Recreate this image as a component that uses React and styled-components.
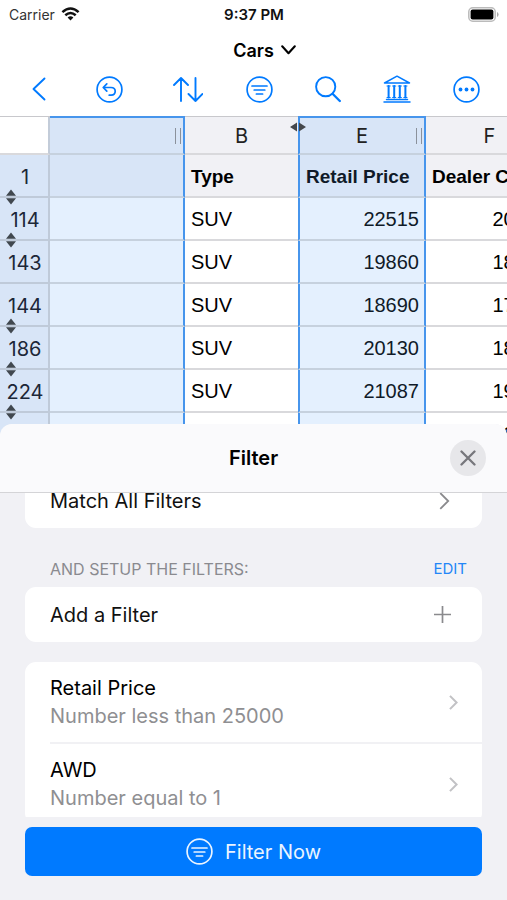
import React from "react";
import styled, { createGlobalStyle, css } from "styled-components";

const BLUE = "#007aff";
const SELECT = "#4795ec";
const UI_FONT = 'Inter, "Liberation Sans", sans-serif';
const CELL_FONT = '"Liberation Sans", Arial, sans-serif';

const GlobalStyle = createGlobalStyle`
  * { box-sizing: border-box; }
  body { margin: 0; background: #fff; }
  button { border: 0; background: none; padding: 0; margin: 0; font: inherit; color: inherit; cursor: pointer; }
  svg { display: block; flex: none; }
`;

const Screen = styled.div`
  display: flex;
  flex-direction: column;
  height: 100vh;
  overflow: hidden;
  background: #fff;
  color: #000;
  font-family: ${UI_FONT};
`;

const StatusBar = styled.div`
  display: grid;
  grid-template-columns: 1fr auto 1fr;
  align-items: center;
  flex: none;
  height: 28px;
  padding: 0 8px 0 9px;
  font-size: 14px;
`;

const Carrier = styled.span`
  display: flex;
  align-items: center;
  gap: 6px;
  color: #333;
`;

const Clock = styled.time`
  font-size: 15px;
  font-weight: 600;
  color: #111;
`;

const BatterySlot = styled.span`
  justify-self: end;
`;

const TitleBar = styled.header`
  display: flex;
  justify-content: center;
  flex: none;
  padding-left: 22px;
`;

const TitleButton = styled.button`
  && {
    display: flex;
    align-items: center;
    gap: 7px;
    height: 44px;
    font-size: 18px;
    font-weight: 600;
  }
`;

const Toolbar = styled.nav`
  display: flex;
  justify-content: space-between;
  align-items: center;
  height: 44px;
  flex: none;
  padding: 0 27px 10px 32px;
  color: ${BLUE};
`;

const ToolGroup = styled.div`
  display: flex;
  align-items: center;
  gap: ${(p) => p.$gap}px;
`;

const ToolButton = styled.button`
  && {
    display: flex;
    color: ${BLUE};
  }
`;

const SheetGrid = styled.main`
  flex: none;
  overflow: hidden;
`;

const Table = styled.table`
  table-layout: fixed;
  width: 553px;
  min-width: 100%;
  border-collapse: separate;
  border-spacing: 0;
  border-top: 1px solid #c8c8cc;
  font-family: ${CELL_FONT};
  font-size: 20px;
`;

const Col = styled.col`
  width: ${(p) => p.$w}px;
`;

const edges = css`
  border-bottom: 2px solid ${(p) => (p.$selected ? "#c6d1de" : "#d9d9dc")};
  border-right: ${(p) => (p.$edge ? `2px solid ${SELECT}` : "0")};
  border-left: ${(p) => (p.$edge === "both" ? `2px solid ${SELECT}` : "0")};
`;

const ColumnHead = styled.th`
  ${edges}
  position: relative;
  height: 38px;
  padding: 2px 0 0;
  font-family: ${UI_FONT};
  font-size: 20px;
  font-weight: 400;
  color: #222;
  background: ${(p) => (p.$selected ? "#d8e5f7" : "#f1f1f5")};
  box-shadow: ${(p) => (p.$selected ? `0 -1px 0 ${SELECT}, inset 0 1px 0 ${SELECT}` : "none")};
`;

const Corner = styled.td`
  border-right: 2px solid #c3ccd9;
  border-bottom: 2px solid #d9d9dc;
`;

const RowHead = styled.th`
  position: relative;
  height: 43px;
  padding: 2px 0 0 2px;
  border-right: 2px solid #bfcad9;
  border-bottom: 2px solid #bfcad9;
  background: #d8e5f7;
  color: #1c2738;
  font-family: ${UI_FONT};
  font-size: 20px;
  font-weight: 400;
`;

const Cell = styled.td`
  ${edges}
  height: 43px;
  padding: 2px 5px 0 6px;
  white-space: nowrap;
  overflow: hidden;
  text-align: ${(p) => (p.$number ? "right" : "left")};
  font-size: ${(p) => (p.$head ? 19 : 20)}px;
  font-weight: ${(p) => (p.$head ? 700 : 400)};
  color: ${(p) => (p.$selected ? "#101a28" : "#000")};
  background: ${(p) => (p.$head ? (p.$selected ? "#d8e5f7" : "#f1f1f5") : p.$selected ? "#e4f0fe" : "#fff")};
`;

const Grip = styled.span`
  position: absolute;
  right: 2px;
  top: 11px;
  width: 6px;
  height: 16px;
  border: solid #8b919b;
  border-width: 0 1px;
`;

const RowMarker = styled.svg`
  position: absolute;
  left: 5px;
  bottom: -9px;
  z-index: 1;
`;

const ColumnMarker = styled.svg`
  position: absolute;
  left: -11px;
  top: 5px;
`;

const FilterSheet = styled.section`
  position: relative;
  z-index: 2;
  display: flex;
  flex-direction: column;
  flex: 1;
  min-height: 0;
  margin-top: -32px;
  border-radius: 12px 12px 0 0;
  overflow: hidden;
  background: #f1f1f5;
`;

const SheetHeader = styled.header`
  display: grid;
  grid-template-columns: 1fr auto 1fr;
  align-items: center;
  flex: none;
  height: 69px;
  padding: 0 21px;
  background: #fafafc;
  border-bottom: 1px solid #d4d4d7;
`;

const SheetTitle = styled.h1`
  grid-column: 2;
  margin: 0;
  font-size: 20px;
  font-weight: 600;
`;

const CloseButton = styled.button`
  && {
    display: flex;
    align-items: center;
    justify-content: center;
    justify-self: end;
    width: 36px;
    height: 36px;
    border-radius: 50%;
    background: #e7e7ea;
    color: #77777c;
  }
`;

const ScrollArea = styled.div`
  flex: 1;
  min-height: 0;
  overflow: hidden;
  margin: 0 25px;
`;

const Card = styled.div`
  border-radius: 11px;
  overflow: hidden;
  background: #fff;
  margin-top: ${(p) => p.$top || 0}px;
`;

const CardButton = styled.button`
  && {
    display: flex;
    align-items: center;
    justify-content: space-between;
    width: 100%;
    height: 55px;
    padding: 0 ${(p) => p.$inset}px 0 25px;
    font-size: 20px;
    text-align: left;
    color: #111;
  }
`;

const SectionHead = styled.div`
  display: flex;
  justify-content: space-between;
  align-items: flex-end;
  height: 59px;
  padding: 0 15px 8px 25px;
  color: #8a8a8f;
  font-size: 15px;
  line-height: 20px;
`;

const SectionLabel = styled.h2`
  margin: 0;
  font-size: 16px;
  font-weight: 400;
`;

const EditButton = styled.button`
  && {
    color: #2386f7;
  }
`;

const RuleButton = styled.button`
  && {
    display: block;
    width: 100%;
    padding-left: 25px;
    text-align: left;
  }
`;

const RuleBody = styled.span`
  display: flex;
  align-items: center;
  justify-content: space-between;
  height: ${(p) => (p.$last ? 80 : 82)}px;
  padding-right: 24px;
  border-bottom: ${(p) => (p.$last ? 0 : 2)}px solid #f1f1f4;
`;

const RuleText = styled.span`
  display: flex;
  flex-direction: column;
  font-size: 20px;
  line-height: 28px;
  color: #000;
`;

const RuleDetail = styled.span`
  color: #8f8f92;
`;

const SheetFooter = styled.footer`
  flex: none;
  padding: 10px 25px 24px;
`;

const PrimaryButton = styled.button`
  && {
    display: flex;
    align-items: center;
    justify-content: center;
    gap: 12px;
    width: 100%;
    height: 49px;
    border-radius: 7px;
    background: ${BLUE};
    color: #eaf4ff;
    font-size: 20px;
  }
`;

const line = { fill: "none", stroke: "currentColor", strokeLinecap: "round", strokeLinejoin: "round" };

const WifiIcon = () => (
  <svg width="19" height="14" viewBox="0 0 18 14" fill="none" stroke="#111" strokeWidth="2.5" aria-hidden="true">
    <path d="M.9 5.1Q9-2.2 17.1 5.1" />
    <path d="M3.8 8.3Q9 3.6 14.2 8.3" />
    <path d="M6.1 10.4Q9 8 11.9 10.4L9 13.6Z" fill="#111" stroke="none" />
  </svg>
);

const BatteryIcon = () => (
  <svg width="31" height="15" viewBox="0 0 31 15" aria-hidden="true">
    <rect x=".8" y=".8" width="26.4" height="13.4" rx="4" fill="#fff" stroke="#bbb" strokeWidth="1.5" />
    <rect x="2.6" y="2.6" width="22.8" height="9.8" rx="2" fill="#000" />
    <path d="M29 5v5q1.6-.8 1.6-2.5T29 5z" fill="#aaa" />
  </svg>
);

const TitleChevron = () => (
  <svg width="15" height="10" viewBox="0 0 15 10" {...line} strokeWidth="2.1" aria-hidden="true">
    <path d="M1.2 1.300l6.300 6.900 6.300-6.900" />
  </svg>
);

const BackIcon = () => (
  <svg width="14" height="24" viewBox="0 0 14 24" {...line} strokeWidth="1.9" aria-hidden="true">
    <path d="M12.500 1.500L1.500 12l11 10.500" />
  </svg>
);

const UndoIcon = () => (
  <svg width="27" height="27" viewBox="0 0 27 27" {...line} strokeWidth="1.7" aria-hidden="true">
    <circle cx="13.5" cy="13.5" r="12.4" />
    <path d="M10.800 7.900l-3.600 3.600 3.600 3.600M7.400 11.500h7.600c2.500 0 4.200 1.600 4.200 3.800s-1.700 3.900-4.100 3.900h-1.900" />
  </svg>
);

const SortIcon = () => (
  <svg width="30" height="25" viewBox="0 0 30 25" {...line} strokeWidth="1.9" aria-hidden="true">
    <path d="M8 24V1M1 8l7-7 7 7M22.500 1v23M15.500 17l7 7 7-7" />
  </svg>
);

const FilterIcon = () => (
  <svg width="27" height="27" viewBox="0 0 27 27" {...line} strokeWidth="1.7" aria-hidden="true">
    <circle cx="13.5" cy="13.5" r="12.4" />
    <path d="M6 10h15M8.200 14h10.600M10.400 18h6.200" />
  </svg>
);

const SearchIcon = () => (
  <svg width="26" height="27" viewBox="0 0 26 27" {...line} strokeWidth="1.9" aria-hidden="true">
    <circle cx="10.7" cy="10.7" r="9.6" />
    <path d="M17.800 18l7 7" strokeWidth="2.3" />
  </svg>
);

const BankIcon = () => (
  <svg width="28" height="28" viewBox="0 0 28 28" {...line} strokeWidth="1.5" aria-hidden="true">
    <path d="M1.500 8L14 1.200 26.500 8zM3.500 24.500h21M1 27h26" />
    <path d="M5.600 11v11.500M11.200 11v11.500M16.800 11v11.500M22.400 11v11.500" strokeWidth="2" />
    <path d="M4 11h3.200M9.600 11h3.200M15.200 11h3.200M20.800 11H24M4 22.500h3.200M9.600 22.500h3.200M15.200 22.500h3.200M20.800 22.500H24" strokeWidth="1" />
  </svg>
);

const MoreIcon = () => (
  <svg width="27" height="27" viewBox="0 0 27 27" {...line} strokeWidth="1.7" aria-hidden="true">
    <circle cx="13.5" cy="13.5" r="12.4" />
    <g fill="currentColor" stroke="none">
      <circle cx="7.500" cy="13.5" r="1.9" />
      <circle cx="13.5" cy="13.5" r="1.9" />
      <circle cx="19.5" cy="13.5" r="1.9" />
    </g>
  </svg>
);

const CloseIcon = () => (
  <svg width="16" height="16" viewBox="0 0 16 16" {...line} strokeWidth="2.3" aria-hidden="true">
    <path d="M1.500 1.500l13 13M14.500 1.500l-13 13" />
  </svg>
);

const Disclosure = ({ large }) => (
  <svg
    width={large ? 11 : 9}
    height={large ? 18 : 15}
    viewBox="0 0 10 17"
    fill="none"
    stroke={large ? "#8a8a8d" : "#c2c2c5"}
    strokeWidth={large ? 1.7 : 2.3}
    aria-hidden="true"
  >
    <path d="M1 1l7.500 7.500L1 16" />
  </svg>
);

const PlusIcon = () => (
  <svg width="17" height="17" viewBox="0 0 17 17" stroke="#8a8a8d" strokeWidth="1.7" aria-hidden="true">
    <path d="M8.500 0v17M0 8.500h17" />
  </svg>
);

const HiddenRows = () => (
  <RowMarker width="12" height="16" viewBox="0 0 12 16" fill="#41484f" aria-hidden="true">
    <path d="M1 6.700L6 .5l5 6.200zM1 9.300l5 6.200 5-6.200z" />
  </RowMarker>
);

const HiddenColumns = () => (
  <ColumnMarker width="18" height="10" viewBox="0 0 18 10" fill="#45484c" aria-hidden="true">
    <path d="M8 .5L1 5l7 4.500zM10 .5L17 5l-7 4.500z" />
  </ColumnMarker>
);

const rows = [
  { id: "114", type: "SUV", price: "22515", cost: "20907", gap: true },
  { id: "143", type: "SUV", price: "19860", cost: "18419", gap: false },
  { id: "144", type: "SUV", price: "18690", cost: "17334", gap: true },
  { id: "186", type: "SUV", price: "20130", cost: "18793", gap: true },
  { id: "224", type: "SUV", price: "21087", cost: "19742", gap: true },
  { id: "", type: "", price: "", cost: "18380", gap: false },
];

const filters = [
  { name: "Retail Price", detail: "Number less than 25000" },
  { name: "AWD", detail: "Number equal to 1" },
];

export default function App() {
  return (
    <Screen>
      <GlobalStyle />
      <StatusBar>
        <Carrier>Carrier <WifiIcon /></Carrier>
        <Clock>9:37 PM</Clock>
        <BatterySlot><BatteryIcon /></BatterySlot>
      </StatusBar>
      <TitleBar>
        <TitleButton type="button">Cars <TitleChevron /></TitleButton>
      </TitleBar>
      <Toolbar aria-label="Spreadsheet tools">
        <ToolGroup $gap={50}>
          <ToolButton type="button" aria-label="Back"><BackIcon /></ToolButton>
          <ToolButton type="button" aria-label="Undo"><UndoIcon /></ToolButton>
          <ToolButton type="button" aria-label="Sort"><SortIcon /></ToolButton>
        </ToolGroup>
        <ToolGroup $gap={42}>
          <ToolButton type="button" aria-label="Filter"><FilterIcon /></ToolButton>
          <ToolButton type="button" aria-label="Search"><SearchIcon /></ToolButton>
          <ToolButton type="button" aria-label="Library"><BankIcon /></ToolButton>
          <ToolButton type="button" aria-label="More"><MoreIcon /></ToolButton>
        </ToolGroup>
      </Toolbar>
      <SheetGrid>
        <Table>
          <colgroup>
            <Col $w={50} /><Col $w={135} /><Col $w={113} /><Col $w={128} /><Col $w={127} />
          </colgroup>
          <thead>
            <tr>
              <Corner />
              <ColumnHead scope="col" $selected $edge="right"><Grip /></ColumnHead>
              <ColumnHead scope="col">B</ColumnHead>
              <ColumnHead scope="col" $selected $edge="both">E<HiddenColumns /><Grip /></ColumnHead>
              <ColumnHead scope="col">F</ColumnHead>
            </tr>
          </thead>
          <tbody>
            <tr>
              <RowHead scope="row">1<HiddenRows /></RowHead>
              <Cell $head $selected $edge="right" />
              <Cell $head>Type</Cell>
              <Cell $head $selected $edge="both">Retail Price</Cell>
              <Cell $head>Dealer Cost</Cell>
            </tr>
            {rows.map((row, i) => (
              <tr key={i}>
                <RowHead scope="row">{row.id}{row.gap && <HiddenRows />}</RowHead>
                <Cell $selected $edge="right" />
                <Cell>{row.type}</Cell>
                <Cell $number $selected $edge="both">{row.price}</Cell>
                <Cell $number>{row.cost}</Cell>
              </tr>
            ))}
          </tbody>
        </Table>
      </SheetGrid>
      <FilterSheet aria-label="Filter">
        <SheetHeader>
          <SheetTitle>Filter</SheetTitle>
          <CloseButton type="button" aria-label="Close"><CloseIcon /></CloseButton>
        </SheetHeader>
        <ScrollArea>
          <Card $top={-20}>
            <CardButton type="button" $inset={32}>Match All Filters<Disclosure large /></CardButton>
          </Card>
          <SectionHead>
            <SectionLabel>AND SETUP THE FILTERS:</SectionLabel>
            <EditButton type="button">EDIT</EditButton>
          </SectionHead>
          <Card>
            <CardButton type="button" $inset={31}>Add a Filter<PlusIcon /></CardButton>
          </Card>
          <Card $top={20}>
            {filters.map((f, i) => (
              <RuleButton type="button" key={f.name}>
                <RuleBody $last={i === filters.length - 1}>
                  <RuleText>{f.name}<RuleDetail>{f.detail}</RuleDetail></RuleText>
                  <Disclosure />
                </RuleBody>
              </RuleButton>
            ))}
          </Card>
        </ScrollArea>
        <SheetFooter>
          <PrimaryButton type="button"><FilterIcon />Filter Now</PrimaryButton>
        </SheetFooter>
      </FilterSheet>
    </Screen>
  );
}
